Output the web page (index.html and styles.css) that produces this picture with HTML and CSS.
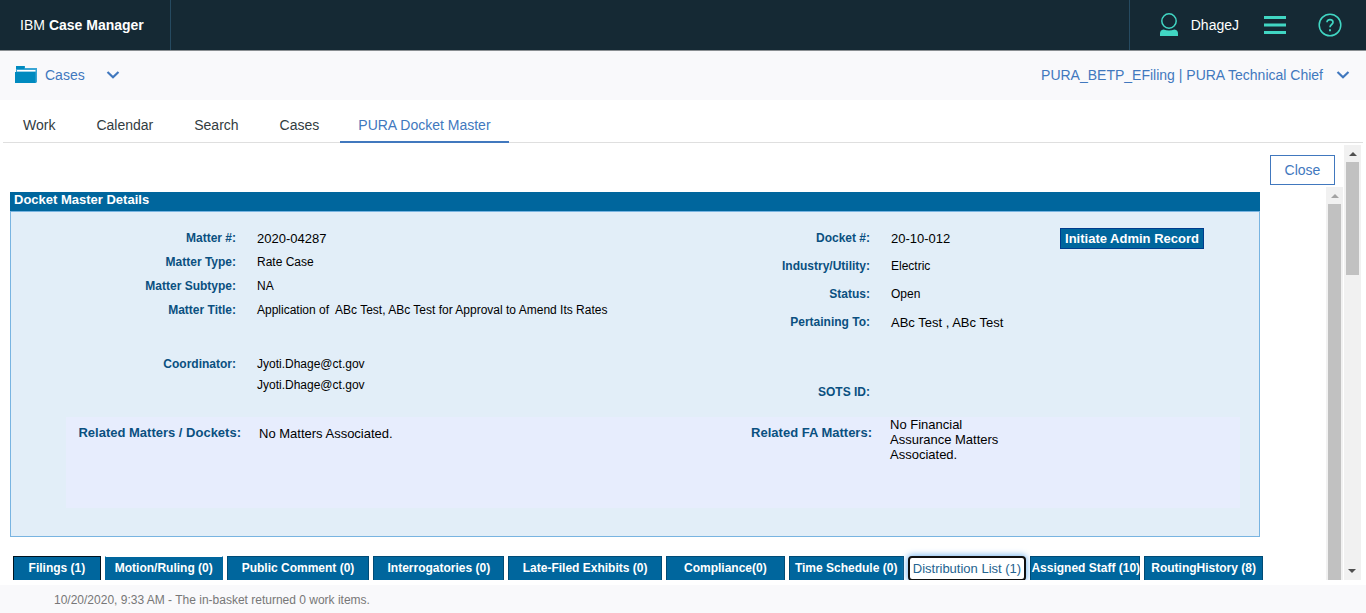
FILE: index.html
```html
<!DOCTYPE html>
<html lang="en">
<head>
<meta charset="utf-8">
<title>IBM Case Manager</title>
<link rel="stylesheet" href="styles.css">
</head>
<body>
<header class="banner">
  <h1 class="brand">IBM <strong>Case Manager</strong></h1>
  <div class="banner-tools">
    <button class="tool user" type="button">
      <svg width="20" height="26" viewBox="0 0 20 26" aria-hidden="true"><circle cx="10" cy="9" r="7.200" fill="none" stroke="#41d6c3" stroke-width="1.500"/><path d="M1 24v-2.500q0-3.500 3.500-4 5.500 2.200 11 0 3.500.5 3.500 4V24z" fill="#41d6c3"/></svg>
      <span>DhageJ</span>
    </button>
    <button class="tool" type="button" aria-label="Menu">
      <svg width="22" height="20" viewBox="0 0 22 20" aria-hidden="true"><path d="M0 2.500h22M0 10h22M0 17.500h22" stroke="#41d6c3" stroke-width="3"/></svg>
    </button>
    <button class="tool" type="button" aria-label="Help">
      <svg width="24" height="24" viewBox="0 0 24 24" aria-hidden="true" fill="none" stroke="#41d6c3"><circle cx="12" cy="12" r="10.800" stroke-width="1.500"/><path d="M9 9.200C9 5.800 15 5.800 15 9.300c0 2.200-3 2.300-3 5" stroke-width="1.700"/><path d="M12 16.300v1.900" stroke-width="1.900"/></svg>
    </button>
  </div>
</header>

<nav class="context-bar" aria-label="Context">
  <a class="context-link" href="#cases">
    <svg width="22" height="18" viewBox="0 0 22 18" aria-hidden="true"><path d="M1 0h9v2h12v14l-1 1H1z" fill="#3aa5d4"/><path d="M2 4h18.500v1.500H2z" fill="#fff"/><path d="M0 6h20.500v11H0z" fill="#008abf"/><path d="M1 0h8.500v3H1z" fill="#008abf"/></svg>
    <span class="cases-label">Cases</span>
    <svg width="14" height="10" viewBox="0 0 14 10" aria-hidden="true"><path d="M1.500 2l5.500 5.200L12.500 2" fill="none" stroke="#4178be" stroke-width="2.200"/></svg>
  </a>
  <a class="context-link role" href="#role">
    <span>PURA_BETP_EFiling | PURA Technical Chief</span>
    <svg width="14" height="10" viewBox="0 0 14 10" aria-hidden="true"><path d="M1.500 2l5.500 5.200L12.500 2" fill="none" stroke="#4178be" stroke-width="2.200"/></svg>
  </a>
</nav>

<nav class="page-tabs" aria-label="Pages">
  <a href="#work">Work</a>
  <a href="#calendar">Calendar</a>
  <a href="#search">Search</a>
  <a href="#cases-page">Cases</a>
  <a class="active" href="#docket" aria-current="page">PURA Docket Master</a>
</nav>

<main class="workspace">
  <div class="page">
    <div class="toolbar"><button class="close" type="button">Close</button></div>
    <div class="frame">
      <div class="frame-content">
        <section class="panel">
          <h2 class="panel-title">Docket Master Details</h2>
          <div class="panel-body">
            <div class="details">
              <dl class="fields">
                <div><dt>Matter #:</dt><dd class="large">2020-04287</dd></div>
                <div><dt>Matter Type:</dt><dd>Rate Case</dd></div>
                <div><dt>Matter Subtype:</dt><dd>NA</dd></div>
                <div><dt>Matter Title:</dt><dd class="keep-spaces">Application of  ABc Test, ABc Test for Approval to Amend Its Rates</dd></div>
                <div class="spaced"><dt>Coordinator:</dt><dd>Jyoti.Dhage@ct.gov<br>Jyoti.Dhage@ct.gov</dd></div>
              </dl>
              <div class="docket">
                <dl class="fields roomy">
                  <div><dt>Docket #:</dt><dd class="large">20-10-012</dd></div>
                  <div><dt>Industry/Utility:</dt><dd>Electric</dd></div>
                  <div><dt>Status:</dt><dd>Open</dd></div>
                  <div><dt>Pertaining To:</dt><dd class="large">ABc Test , ABc Test</dd></div>
                  <div class="sots"><dt>SOTS ID:</dt><dd></dd></div>
                </dl>
                <button class="initiate" type="button">Initiate Admin Record</button>
              </div>
            </div>
            <dl class="related">
              <div><dt>Related Matters / Dockets:</dt><dd class="single">No Matters Associated.</dd></div>
              <div class="financial"><dt>Related FA Matters:</dt><dd>No Financial Assurance Matters Associated.</dd></div>
            </dl>
          </div>
        </section>
        <div class="section-tabs">
          <button class="dark" type="button">Filings (1)</button>
          <button class="plain" type="button">Motion/Ruling (0)</button>
          <button type="button">Public Comment (0)</button>
          <button type="button">Interrogatories (0)</button>
          <button type="button">Late-Filed Exhibits (0)</button>
          <button type="button">Compliance(0)</button>
          <button type="button">Time Schedule (0)</button>
          <button class="selected" type="button">Distribution List (1)</button>
          <button type="button">Assigned Staff (10)</button>
          <button type="button">RoutingHistory (8)</button>
        </div>
      </div>
      <div class="scrollbar" aria-hidden="true"><span class="arrow muted"></span><span class="thumb full"></span></div>
    </div>
  </div>
  <div class="scrollbar outer" aria-hidden="true"><span class="arrow"></span><span class="thumb"></span><span class="arrow down"></span></div>
</main>

<footer class="status">10/20/2020, 9:33 AM - The in-basket returned 0 work items.</footer>
</body>
</html>
```

FILE: styles.css
```css
* { box-sizing: border-box; }

body {
  margin: 0;
  height: 100vh;
  display: flex;
  flex-direction: column;
  overflow: hidden;
  background: #fff;
  color: #000;
  font: 14px/20px "Liberation Sans", Arial, sans-serif;
}

button { margin: 0; padding: 0; font: inherit; cursor: pointer; }
a { color: inherit; text-decoration: none; }
svg { display: block; flex: none; }
dl, dd, h1, h2 { margin: 0; }

/* Top banner */
.banner {
  flex: none;
  display: flex;
  justify-content: space-between;
  height: 51px;
  border-bottom: 1px solid #8a8f92;
  background: #152934;
  color: #fff;
}
.brand {
  display: flex;
  align-items: center;
  gap: 4px;
  padding: 0 26px 0 20px;
  border-right: 1px solid #264a60;
  font-size: 14px;
  font-weight: 400;
}
.banner-tools {
  display: flex;
  align-items: center;
  gap: 32px;
  padding: 0 24px 0 29px;
  border-left: 1px solid #264a60;
}
.tool { border: 0; background: none; color: #fff; }
.user { display: flex; align-items: center; gap: 12px; margin-right: -7px; }

/* Context bar */
.context-bar {
  flex: none;
  display: flex;
  justify-content: space-between;
  align-items: center;
  height: 49px;
  padding: 0 16px 2px 15px;
  background: #f9f9fb;
  color: #4178be;
}
.context-link { display: flex; align-items: center; gap: 8px; }
.cases-label { margin-right: 13px; }
.role { gap: 13px; }

/* Page tabs */
.page-tabs {
  flex: none;
  display: flex;
  gap: 1px;
  height: 43px;
  margin: 0 3px;
  border-bottom: 1px solid #dfdfdf;
  color: #323c41;
}
.page-tabs a { height: 43px; padding: 15px 20px 0; }
.page-tabs .active {
  padding: 15px 18px 0;
  border-bottom: 2px solid #4178be;
  color: #4178be;
}

/* Workspace */
.workspace {
  flex: 1;
  min-height: 0;
  display: flex;
  gap: 1px;
  padding: 2px 5px 5px 10px;
}
.page { flex: 1; min-width: 0; display: flex; flex-direction: column; }
.toolbar { display: flex; justify-content: flex-end; padding: 10px 8px 2px 0; }
.close {
  width: 65px;
  height: 30px;
  border: 1px solid #4178be;
  background: #fff;
  color: #4178be;
}
.frame { flex: 1; min-height: 0; display: flex; }
.frame-content { flex: 1; min-width: 0; padding: 5px 66px 0 0; overflow: hidden; }

/* Details panel */
.panel-title {
  padding: 0 4px 3px;
  background: #00669d;
  color: #fff;
  font-size: 13px;
  line-height: 16px;
}
.panel-body {
  padding: 14px 0 28px;
  border: 1px solid #78b4e1;
  background: #e2eef8;
}
.details { display: grid; grid-template-columns: 1fr 1fr; }
.fields { flex: 1; font-size: 12px; line-height: 24px; }
.fields > div { display: flex; gap: 21px; }
.fields dt {
  flex: none;
  width: 225px;
  color: #0a5080;
  font-weight: 700;
  text-align: right;
}
.fields dd { white-space: nowrap; line-height: 25px; margin-bottom: -1px; }
.fields .large { font-size: 13px; }
.fields .keep-spaces { white-space: pre; }
.spaced { padding-top: 30px; }
.spaced dd { line-height: 21px; padding-top: 2px; }
.roomy dt { width: 235px; line-height: 24px; }
.roomy > div { padding-bottom: 4px; }
.roomy .sots { padding-top: 42px; padding-bottom: 0; }
.docket {
  display: flex;
  justify-content: space-between;
  align-items: flex-start;
  padding-right: 55px;
}
.initiate {
  margin-top: 2px;
  width: 144px;
  height: 21px;
  border: 1px solid #003c8c;
  background: #00669d;
  color: #fff;
  font-size: 13px;
  font-weight: 700;
  line-height: 19px;
  white-space: nowrap;
}
.related {
  display: grid;
  grid-template-columns: 1fr 1fr;
  min-height: 91px;
  margin: 13px 19px 0 55px;
  background: #e7edfd;
  font-size: 13px;
  line-height: 15px;
}
.related > div { display: flex; gap: 18px; }
.related dt {
  flex: none;
  width: 175px;
  padding-top: 8px;
  color: #0a5080;
  font-weight: 700;
  text-align: right;
}
.related dd { max-width: 124px; }
.related .single { max-width: none; padding-top: 9px; }
.related .financial dt { width: 219px; }

/* Section buttons */
.section-tabs {
  display: grid;
  grid-template-columns: 88fr 118fr 143fr 131fr 154fr 119fr 115fr 119fr 110fr 119fr;
  gap: 4px;
  margin: 19px -3px 0 3px;
}
.section-tabs button {
  min-width: 0;
  height: 26px;
  padding-bottom: 2px;
  border: 1px solid #004b76;
  background: #00669d;
  color: #fff;
  font-size: 12px;
  font-weight: 700;
  line-height: 20px;
  white-space: nowrap;
}
.section-tabs .dark { border-color: #00131f; }
.section-tabs .plain { border-color: #fff #00669d #00669d; }
.section-tabs .selected {
  height: 25px;
  padding: 0;
  border: 2px solid #101010;
  border-radius: 4px;
  background: #fff;
  box-shadow: 0 0 6px 1px #7ab8f0;
  color: #24638f;
  font-size: 13px;
  font-weight: 400;
}

/* Scrollbars */
.scrollbar {
  flex: none;
  display: flex;
  flex-direction: column;
  align-items: center;
  width: 17px;
  background: #f1f1f1;
}
.thumb { width: 13px; height: 113px; background: #c1c1c1; }
.thumb.full { flex: 1; }
.arrow { display: grid; place-items: center; width: 17px; height: 17px; }
.arrow::before {
  content: "";
  border: 4px solid transparent;
  border-top-width: 0;
  border-bottom-color: #505050;
}
.arrow.muted::before { border-bottom-color: #a3a3a3; }
.arrow.down { margin-top: auto; transform: rotate(180deg); }

/* Status bar */
.status {
  flex: none;
  padding: 5px 54px 3px;
  background: #f9f9fb;
  color: #777;
  font-size: 12px;
}
```
